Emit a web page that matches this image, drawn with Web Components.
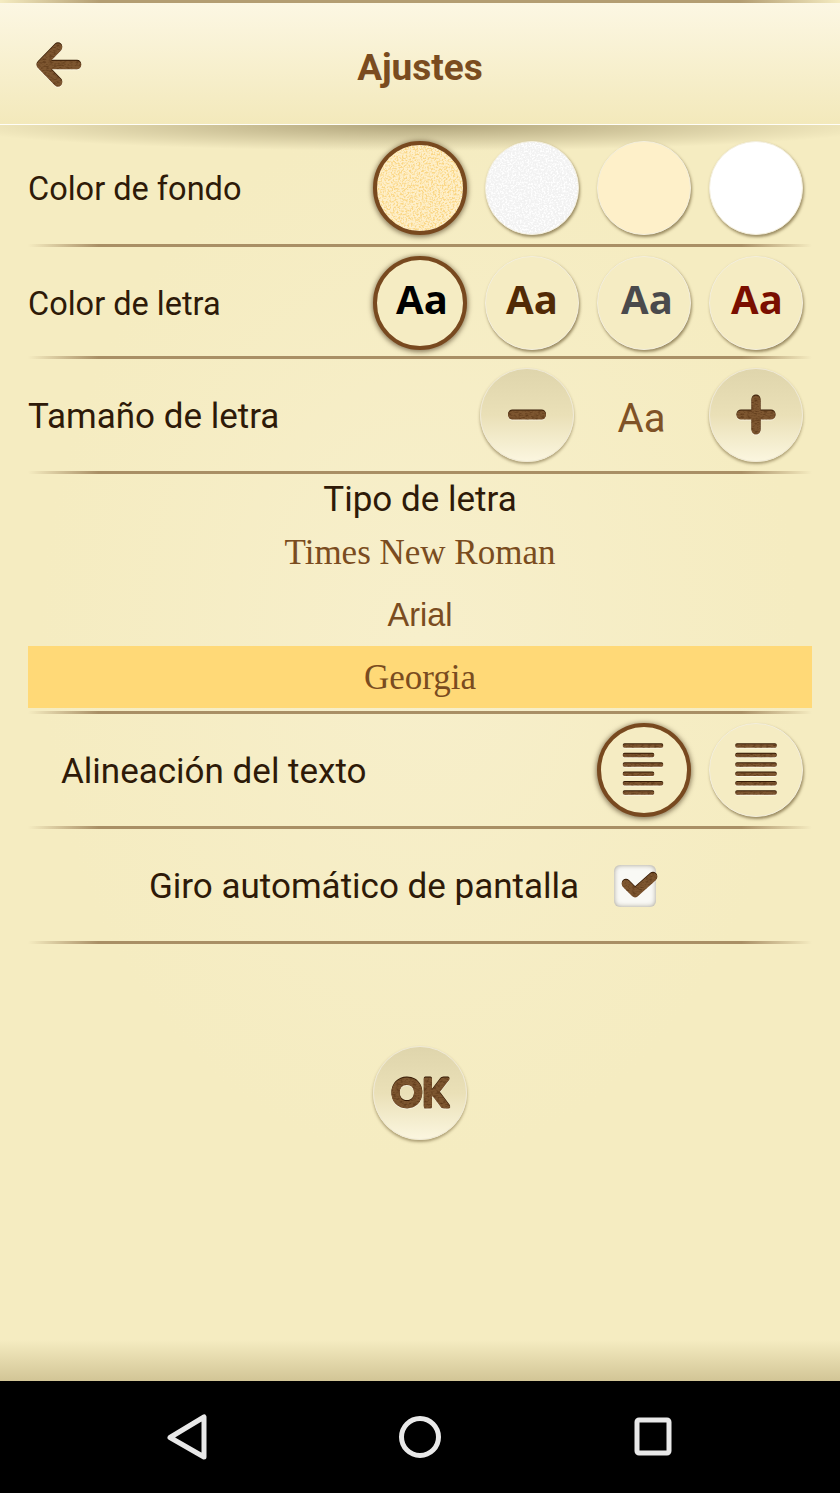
<!DOCTYPE html>
<html lang="es">
<head>
<meta charset="utf-8">
<title>Ajustes</title>
<style>
html, body { margin: 0; padding: 0; background: #f5ecc3; }
</style>
</head>
<body>
<settings-screen></settings-screen>

<script>
// shared filter for the brown "wood" look of the icons
const WOOD_FILTER = `
<defs>
  <filter id="wood" filterUnits="userSpaceOnUse" x="-10" y="-10" width="120" height="120" color-interpolation-filters="sRGB">
    <feTurbulence type="fractalNoise" baseFrequency=".3 .7" numOctaves="2" seed="4" result="n"/>
    <feColorMatrix in="n" values="0 0 0 0 .3  0 0 0 0 .16  0 0 0 0 .05  0 0 0 1.500 -.65" result="grain"/>
    <feComposite in="grain" in2="SourceAlpha" operator="in" result="grainIn"/>
    <feOffset in="SourceAlpha" dy="-1" result="up"/>
    <feFlood flood-color="#351a04"/>
    <feComposite in2="up" operator="in" result="dark"/>
    <feOffset in="SourceAlpha" dy="1" result="down"/>
    <feFlood flood-color="#ffffff" flood-opacity=".5"/>
    <feComposite in2="down" operator="in" result="light"/>
    <feMerge>
      <feMergeNode in="light"/>
      <feMergeNode in="dark"/>
      <feMergeNode in="SourceGraphic"/>
      <feMergeNode in="grainIn"/>
    </feMerge>
  </filter>
</defs>`;

const ICONS = {
  back: { w: 60, h: 60, cap: 8.500, d: "M25 12.500 L8 30 L25 47.500 M8 30 H44" },
  minus: { w: 50, h: 20, cap: 9, d: "M10.500 10 H39.500" },
  plus: { w: 50, h: 50, cap: 9, d: "M10 25 H40 M25 10 V40" },
  left: { w: 52, h: 56, cap: 3.500, d: "M6.500 4 H43.500 M6.500 13.500 H34.500 M6.500 23 H43.500 M6.500 32.300 H34.500 M6.500 41.700 H43.500 M6.500 51 H34.500" },
  justify: { w: 52, h: 56, cap: 3.500, d: "M7 4 H45 M7 13.500 H45 M7 23 H45 M7 32.300 H45 M7 41.700 H45 M7 51 H45" },
  check: { w: 48, h: 38, cap: 8.500, d: "M10 18 L19 27 L37 11" }
};

class WoodIcon extends HTMLElement {
  constructor() {
    super();
    const icon = ICONS[this.getAttribute("name")];
    this.attachShadow({ mode: "open" });
    this.shadowRoot.innerHTML = `
<style>
:host { display: block; line-height: 0; }
svg { display: block; overflow: visible; }
</style>
<svg width="${icon.w}" height="${icon.h}" viewBox="0 0 ${icon.w} ${icon.h}">
  ${WOOD_FILTER}
  <g filter="url(#wood)">
    <path d="${icon.d}" fill="none" stroke="#7d5630" stroke-width="${icon.cap}" stroke-linecap="round" stroke-linejoin="round"/>
  </g>
</svg>`;
  }
}
customElements.define("wood-icon", WoodIcon);

const template_rb = document.createElement("template");
template_rb.innerHTML = `
<style>
:host {
  display: flex;
  flex: none;
  position: relative;
  box-sizing: border-box;
  width: 94px;
  height: 94px;
  border-radius: 50%;
  align-items: center;
  justify-content: center;
  background: var(--face, #f5ecc3);
  border: 1px solid #f4efdd;
  box-shadow: 1px 2px 3px rgba(80, 60, 20, .55);
  font: 700 40px "Open Sans", sans-serif;
}
:host([raised]) {
  background: linear-gradient(#dfd5ac, #eae0b7 50%, #fbf6df);
  border: 1px solid #efe9d6;
  box-shadow: 0 2px 3px rgba(80, 60, 20, .45);
}
:host([selected]) {
  border: 4.500px solid #78491f;
  box-shadow: 0 1px 5px 1px rgba(50, 30, 5, .55);
}
svg.grain {
  position: absolute;
  inset: 0;
  width: 100%;
  height: 100%;
  border-radius: 50%;
}
</style>
<slot></slot>`;

class RoundButton extends HTMLElement {
  constructor() {
    super();
    this.attachShadow({ mode: "open" });
    this.shadowRoot.appendChild(template_rb.content.cloneNode(true));
    const grain = this.getAttribute("grain");
    if (grain) {
      const [r, g, b] = grain.split(" ");
      this.shadowRoot.innerHTML += `
<svg class="grain">
  <filter id="speckle" x="0" y="0" width="100%" height="100%" color-interpolation-filters="sRGB">
    <feTurbulence type="fractalNoise" baseFrequency=".55" numOctaves="3" seed="7"/>
    <feColorMatrix values="0 0 0 0 ${r}  0 0 0 0 ${g}  0 0 0 0 ${b}  0 0 0 3.500 -1.500"/>
  </filter>
  <rect width="100%" height="100%" filter="url(#speckle)"/>
</svg>`;
    }
  }
}
customElements.define("round-button", RoundButton);

const template_row = document.createElement("template");
template_row.innerHTML = `
<style>
:host {
  display: block;
  font: 400 var(--label-size, 35px) Roboto, sans-serif;
  color: #2e1a08;
}
.line {
  display: flex;
  align-items: center;
  justify-content: space-between;
  padding: var(--pad-top, 9px) 37px var(--pad-bottom, 9px) var(--pad-left, 28px);
}
.line > span { padding-top: 2px; }
.rule {
  height: 3px;
  margin: 0 28px;
  background: linear-gradient(90deg, rgba(169,143,101,0), #a98f65 9%, #a98f65 91%, rgba(169,143,101,0));
}
.controls { display: flex; align-items: center; gap: 18px; }
</style>
<div class="line">
  <span><slot name="label"></slot></span>
  <div class="controls"><slot></slot></div>
</div>
<div class="rule"></div>`;

class SettingsRow extends HTMLElement {
  constructor() {
    super();
    this.attachShadow({ mode: "open" });
    this.shadowRoot.appendChild(template_row.content.cloneNode(true));
  }
}
customElements.define("settings-row", SettingsRow);

class FontOption extends HTMLElement {
  constructor() {
    super();
    this.attachShadow({ mode: "open" });
    this.shadowRoot.innerHTML = `
<style>
:host {
  display: flex;
  height: 62px;
  align-items: center;
  justify-content: center;
  box-sizing: border-box;
  margin: 0 28px;
  color: #7a4c20;
}
:host([selected]) { background: #ffd977; padding-top: 2px; }
</style>
<slot></slot>`;
  }
}
customElements.define("font-option", FontOption);

class AppHeader extends HTMLElement {
  constructor() {
    super();
    this.attachShadow({ mode: "open" });
    this.shadowRoot.innerHTML = `
<style>
:host {
  display: block;
  position: relative;
  flex: none;
}
.edge {
  height: 3px;
  background: linear-gradient(90deg, rgba(178,155,112,0), #b39d72 12%, #b39d72 88%, rgba(178,155,112,0));
}
.bar {
  display: grid;
  grid-template-columns: 1fr auto 1fr;
  align-items: center;
  height: 122px;
  box-sizing: border-box;
  padding: 6px 28px 0 28px;
  border-bottom: 1px solid #fffef8;
  background: linear-gradient(#fcf7e3, #f3e9bb);
}
.back { margin-left: 5px; margin-top: -3px; }
h1 {
  margin: 2px 0 0;
  font: 700 37px Roboto, sans-serif;
  color: #7a4c20;
}
.shade {
  position: absolute;
  left: 0;
  right: 0;
  top: 125px;
  height: 28px;
  background: radial-gradient(ellipse 470px 26px at 50% 0, rgba(120,105,65,.55), rgba(120,105,65,0));
}
</style>
<div class="edge"></div>
<div class="bar">
  <wood-icon class="back" name="back"></wood-icon>
  <h1>Ajustes</h1>
</div>
<div class="shade"></div>`;
  }
}
customElements.define("app-header", AppHeader);

class NavBar extends HTMLElement {
  constructor() {
    super();
    this.attachShadow({ mode: "open" });
    this.shadowRoot.innerHTML = `
<style>
:host {
  display: block;
  flex: none;
  height: 112px;
  background: #000;
}
svg { display: block; }
</style>
<svg width="840" height="112" viewBox="0 0 840 112" fill="none" stroke="#e9e9e9" stroke-width="5" stroke-linejoin="round">
  <path d="M170 56.500 L204 36 V76 Z"/>
  <circle cx="420" cy="56" r="18.500"/>
  <rect x="637" y="39" width="32" height="33" rx="2"/>
</svg>`;
  }
}
customElements.define("nav-bar", NavBar);

class SettingsScreen extends HTMLElement {
  constructor() {
    super();
    this.attachShadow({ mode: "open" });
    this.shadowRoot.innerHTML = `
<style>
:host {
  display: flex;
  flex-direction: column;
  width: 840px;
  height: 1493px;
  overflow: hidden;
  background: radial-gradient(ellipse 380px 520px at 50% 640px, #f7efcb, #f5ecc1);
}
main { flex: 1; min-height: 0; }
.aa { padding-bottom: 8px; line-height: 1; }
.size-label {
  width: 135px;
  padding-top: 6px;
  text-align: center;
  font: 400 40px Roboto, sans-serif;
  color: #7f5226;
}
.heading {
  height: 48px;
  display: flex;
  align-items: center;
  justify-content: center;
  padding-top: 2px;
  box-sizing: border-box;
  font: 400 35px Roboto, sans-serif;
  color: #2e1a08;
}
.check-row {
  --pad-top: 34px;
  --pad-bottom: 34px;
  --pad-left: 149px;
}
.check {
  display: flex;
  align-items: center;
  gap: 35px;
}
.box {
  position: relative;
  width: 42px;
  height: 42px;
  box-sizing: border-box;
  border-radius: 6px;
  background: #f9f9f5;
  box-shadow: inset 0 0 5px rgba(90, 80, 60, .55);
}
.box wood-icon { position: absolute; left: 2px; top: 1px; }
.ok {
  display: flex;
  justify-content: center;
  padding-top: 102px;
}
.ok svg { display: block; }
.ok text {
  font: 700 38px Lato, sans-serif;
  fill: #7d5630;
  stroke: #7d5630;
  stroke-width: 3;
  stroke-linejoin: round;
}
.bottom {
  flex: none;
  height: 41px;
  background: linear-gradient(rgba(210,197,150,0), #d2c596);
}
</style>
<app-header></app-header>
<main>
  <settings-row style="--pad-top:16px;--label-size:32.500px">
    <span slot="label">Color de fondo</span>
    <round-button selected grain=".98 .84 .52" style="--face:#feefc9"></round-button>
    <round-button grain="1 1 1" style="--face:#f2f2f2"></round-button>
    <round-button style="--face:#fef0c9"></round-button>
    <round-button style="--face:#ffffff"></round-button>
  </settings-row>
  <settings-row style="--pad-bottom:6px;--label-size:32.500px">
    <span slot="label">Color de letra</span>
    <round-button selected><span class="aa" style="color:#000;padding-left:4px">Aa</span></round-button>
    <round-button><span class="aa" style="color:#512a06">Aa</span></round-button>
    <round-button><span class="aa" style="color:#4a4a4c;padding-left:6px">Aa</span></round-button>
    <round-button><span class="aa" style="color:#7a0f00;padding-left:2px">Aa</span></round-button>
  </settings-row>
  <settings-row>
    <span slot="label">Tamaño de letra</span>
    <div style="display:flex;align-items:center">
      <round-button raised><wood-icon name="minus"></wood-icon></round-button>
      <span class="size-label">Aa</span>
      <round-button raised><wood-icon name="plus"></wood-icon></round-button>
    </div>
  </settings-row>
  <div class="heading">Tipo de letra</div>
  <font-option style="font:35px 'Liberation Serif',serif">Times New Roman</font-option>
  <font-option style="font:32.500px 'Liberation Sans',sans-serif">Arial</font-option>
  <font-option selected style="font:35px 'Liberation Serif',serif">Georgia</font-option>
  <settings-row style="--pad-top:1px;--pad-bottom:0"></settings-row>
  <settings-row style="--pad-left:61px">
    <span slot="label">Alineación del texto</span>
    <round-button selected><wood-icon name="left"></wood-icon></round-button>
    <round-button><wood-icon name="justify"></wood-icon></round-button>
  </settings-row>
  <settings-row class="check-row">
    <div slot="label" class="check">
      <span>Giro automático de pantalla</span>
      <div class="box"><wood-icon name="check"></wood-icon></div>
    </div>
  </settings-row>
  <div class="ok">
    <round-button raised>
      <svg width="80" height="60" viewBox="0 0 80 60">
        ${WOOD_FILTER}
        <text x="40" y="44" text-anchor="middle" filter="url(#wood)">OK</text>
      </svg>
    </round-button>
  </div>
</main>
<div class="bottom"></div>
<nav-bar></nav-bar>`;
  }
}
customElements.define("settings-screen", SettingsScreen);
</script>
</body>
</html>
